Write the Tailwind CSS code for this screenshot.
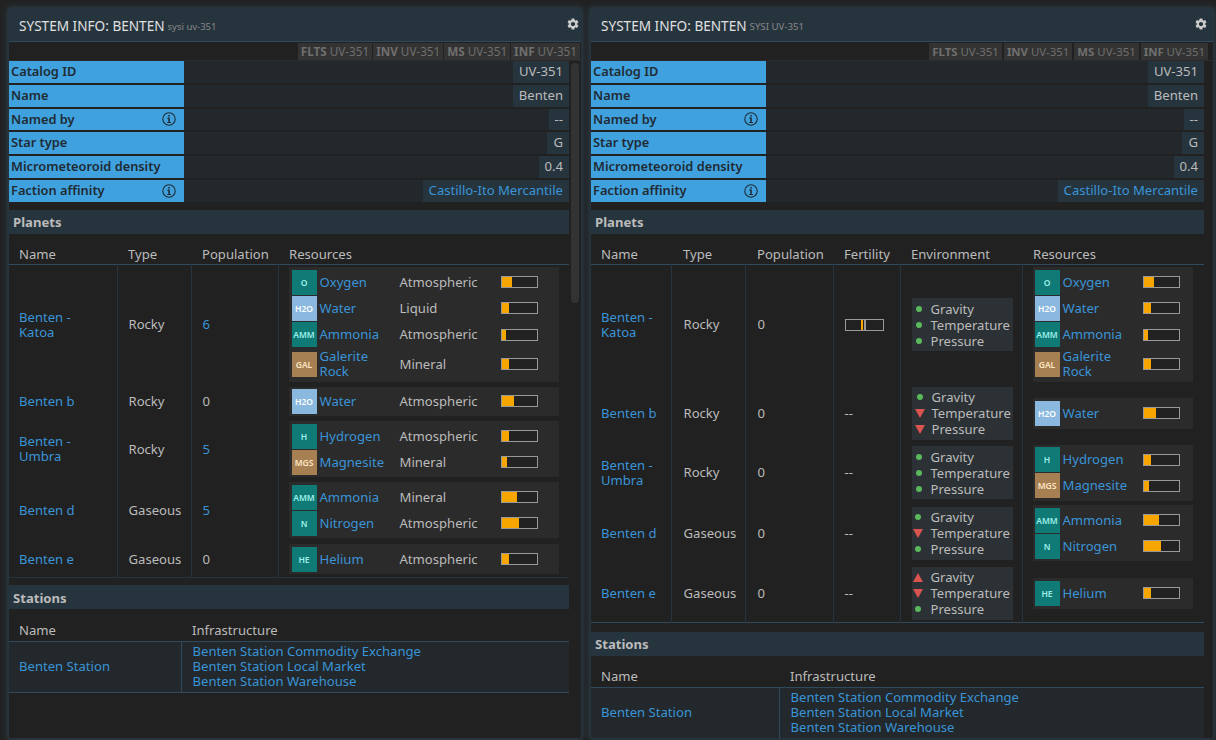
<!DOCTYPE html>
<html lang="en">
<head>
<meta charset="UTF-8">
<title>System Info: Benten</title>
<script src="https://cdn.jsdelivr.net/npm/@tailwindcss/browser@4"></script>
</head>
<body class="bg-[#222222] font-['Noto_Sans',sans-serif] text-[13.1px] leading-[15px] text-[#bbbbbb] overflow-hidden">
<svg class="hidden">
  <symbol id="gear" viewBox="0 0 24 24"><path fill="#cccccc" d="M19.14 12.94c.04-.3.06-.61.06-.94 0-.32-.02-.64-.07-.94l2.03-1.58c.18-.14.23-.41.12-.61l-1.92-3.32c-.12-.22-.37-.29-.59-.22l-2.39.96c-.5-.38-1.03-.7-1.62-.94l-.36-2.54c-.04-.24-.24-.41-.48-.41h-3.84c-.24 0-.43.17-.47.41l-.36 2.54c-.59.24-1.13.57-1.62.94l-2.39-.96c-.22-.08-.47 0-.59.22L2.74 8.87c-.12.21-.08.47.12.61l2.03 1.58c-.05.3-.09.63-.09.94s.02.64.07.94l-2.03 1.58c-.18.14-.23.41-.12.61l1.92 3.32c.12.22.37.29.59.22l2.39-.96c.5.38 1.03.7 1.62.94l.36 2.54c.05.24.24.41.48.41h3.84c.24 0 .44-.17.47-.41l.36-2.54c.59-.24 1.13-.56 1.62-.94l2.39.96c.22.08.47 0 .59-.22l1.92-3.32c.12-.22.07-.47-.12-.61l-2.01-1.58zM12 15.6c-1.98 0-3.6-1.62-3.6-3.6s1.62-3.6 3.6-3.6 3.6 1.62 3.6 3.6-1.62 3.6-3.6 3.6z"/></symbol>
  <symbol id="info" viewBox="0 0 14 14"><circle cx="7" cy="7" r="6.2" fill="none" stroke="#1f2a33" stroke-width="1.1"/><rect x="6.3" y="3" width="1.5" height="1.6" fill="#1f2a33"/><rect x="6.3" y="5.6" width="1.5" height="5.2" fill="#1f2a33"/><rect x="5.2" y="5.6" width="2" height="1" fill="#1f2a33"/><rect x="5.2" y="10" width="3.8" height="1" fill="#1f2a33"/></symbol>
  <symbol id="down" viewBox="0 0 10 9"><polygon points="0,0 10,0 5,9" fill="#d9534f"/></symbol>
  <symbol id="up" viewBox="0 0 10 9"><polygon points="0,9 10,9 5,0" fill="#d9534f"/></symbol>
</svg>

<div class="flex h-[740px] pt-[8px] pl-[8px] gap-[8px]">

  <!-- left window -->
  <section class="w-[574px] h-[731px] shrink-0 border border-[#26343e] bg-[#212121] overflow-hidden shadow-[0_0_6px_#2f4a5c]">
    <header class="h-[33px] bg-[#26343e] border-b border-[#2f4a5c] flex items-center pl-[10px] pr-[1px]">
      <span class="text-[13.6px] text-[#e0e0e0]">SYSTEM INFO: BENTEN</span>
      <span class="text-[9.5px] text-[#888888] ml-[3px] mt-[2px]">sysi uv-351</span>
      <svg class="w-[14px] h-[14px] ml-auto mb-[3px]"><use href="#gear"/></svg>
    </header>
    <div class="h-[19px] flex justify-end items-center gap-[1px] border-b border-[#2b2b2b] text-[11.7px] text-[#6f6f6f] pr-[1px]">
      <span class="bg-[#333333] h-[17px] leading-[17px] px-[3px]"><b>FLTS</b> UV-351</span>
      <span class="bg-[#333333] h-[17px] leading-[17px] px-[3px]"><b>INV</b> UV-351</span>
      <span class="bg-[#333333] h-[17px] leading-[17px] px-[3px]"><b>MS</b> UV-351</span>
      <span class="bg-[#333333] h-[17px] leading-[17px] px-[3px]"><b>INF</b> UV-351</span>
    </div>
    <div class="flex">
      <div class="w-[560px] shrink-0">
        <div class="flex flex-col gap-[2px]">
          <div class="h-[21.8px] flex bg-[#22282b]"><div class="w-[175px] bg-[#3fa2de] text-[#1f2a33] text-[12.8px] font-semibold pl-[2px] leading-[21px]">Catalog ID</div><div class="ml-auto bg-[#26343e] px-[6px] leading-[21px]">UV-351</div></div>
          <div class="h-[21.8px] flex bg-[#22282b]"><div class="w-[175px] bg-[#3fa2de] text-[#1f2a33] text-[12.8px] font-semibold pl-[2px] leading-[21px]">Name</div><div class="ml-auto bg-[#26343e] px-[6px] leading-[21px]">Benten</div></div>
          <div class="h-[21.8px] flex bg-[#22282b]"><div class="w-[175px] bg-[#3fa2de] text-[#1f2a33] text-[12.8px] font-semibold pl-[2px] leading-[21px] flex items-center justify-between pr-[8px]">Named by<svg class="w-[14px] h-[14px]"><use href="#info"/></svg></div><div class="ml-auto bg-[#26343e] px-[6px] leading-[21px]">--</div></div>
          <div class="h-[21.8px] flex bg-[#22282b]"><div class="w-[175px] bg-[#3fa2de] text-[#1f2a33] text-[12.8px] font-semibold pl-[2px] leading-[21px]">Star type</div><div class="ml-auto bg-[#26343e] px-[6px] leading-[21px]">G</div></div>
          <div class="h-[21.8px] flex bg-[#22282b]"><div class="w-[175px] bg-[#3fa2de] text-[#1f2a33] text-[12.8px] font-semibold pl-[2px] leading-[21px]">Micrometeoroid density</div><div class="ml-auto bg-[#26343e] px-[6px] leading-[21px]">0.4</div></div>
          <div class="h-[21.8px] flex bg-[#22282b]"><div class="w-[175px] bg-[#3fa2de] text-[#1f2a33] text-[12.8px] font-semibold pl-[2px] leading-[21px] flex items-center justify-between pr-[8px]">Faction affinity<svg class="w-[14px] h-[14px]"><use href="#info"/></svg></div><div class="ml-auto bg-[#26343e] px-[6px] leading-[21px] text-[#3a94d6]">Castillo-Ito Mercantile</div></div>
        </div>

        <h2 class="mt-[8.2px] h-[24px] bg-[#26343e] pl-[4px] font-bold leading-[25px] text-[#bbbbbb]">Planets</h2>
        <table class="mt-[10px] w-[560px] table-fixed border-collapse">
          <colgroup><col class="w-[108px]"><col class="w-[74px]"><col class="w-[87px]"><col class="w-[291px]"></colgroup>
          <thead><tr class="h-[21px] border-b border-[#2f4a5c] text-left"><th class="font-normal pl-[10px]">Name</th><th class="font-normal pl-[11px]">Type</th><th class="font-normal pl-[11px]">Population</th><th class="font-normal pl-[11px]">Resources</th></tr></thead>
          <tbody>
            <tr class="h-[119px]">
              <td class="pl-[10px] pr-[20px] text-[#3a94d6]">Benten - Katoa</td><td class="pl-[11px] border-l border-[#26343e]">Rocky</td><td class="pl-[11px] border-l border-[#26343e] text-[#3a94d6]">6</td>
              <td class="pl-[10px] border-l border-[#26343e]">
                <div class="w-[270px] bg-[#2b2b2b] py-[2px] pl-[3px]">
                  <div class="h-[26px] flex items-center"><div class="w-[25px] h-[25px] flex items-center justify-center bg-[#0f7a76] text-[#9ff0ea] text-[8.5px] font-semibold">O</div><span class="w-[83px] pl-[3px] text-[#3a94d6]">Oxygen</span><span class="w-[101px]">Atmospheric</span><div class="w-[37px] h-[12px] border border-[#999999] bg-[#222222]"><div class="h-full bg-[#f7a600]" style="width:10px"></div></div></div>
                  <div class="h-[26px] flex items-center"><div class="w-[25px] h-[25px] flex items-center justify-center bg-[#8ab8de] text-white text-[8.5px] font-semibold">H2O</div><span class="w-[83px] pl-[3px] text-[#3a94d6]">Water</span><span class="w-[101px]">Liquid</span><div class="w-[37px] h-[12px] border border-[#999999] bg-[#222222]"><div class="h-full bg-[#f7a600]" style="width:7px"></div></div></div>
                  <div class="h-[27px] flex items-center"><div class="w-[25px] h-[25px] flex items-center justify-center bg-[#0f7a76] text-[#9ff0ea] text-[8.5px] font-semibold">AMM</div><span class="w-[83px] pl-[3px] text-[#3a94d6]">Ammonia</span><span class="w-[101px]">Atmospheric</span><div class="w-[37px] h-[12px] border border-[#999999] bg-[#222222]"><div class="h-full bg-[#f7a600]" style="width:4px"></div></div></div>
                  <div class="h-[32px] flex items-center"><div class="w-[25px] h-[25px] flex items-center justify-center bg-[#a67f53] text-[#fde7c5] text-[8.5px] font-semibold">GAL</div><span class="w-[83px] pl-[3px] text-[#3a94d6]">Galerite<br>Rock</span><span class="w-[101px]">Mineral</span><div class="w-[37px] h-[12px] border border-[#999999] bg-[#222222]"><div class="h-full bg-[#f7a600]" style="width:7px"></div></div></div>
                </div>
              </td>
            </tr>
            <tr class="h-[35px]">
              <td class="pl-[10px] pr-[20px] text-[#3a94d6]">Benten b</td><td class="pl-[11px] border-l border-[#26343e]">Rocky</td><td class="pl-[11px] border-l border-[#26343e]">0</td>
              <td class="pl-[10px] border-l border-[#26343e]">
                <div class="w-[270px] bg-[#2b2b2b] py-[2px] pl-[3px]">
                  <div class="h-[25px] flex items-center"><div class="w-[25px] h-[25px] flex items-center justify-center bg-[#8ab8de] text-white text-[8.5px] font-semibold">H2O</div><span class="w-[83px] pl-[3px] text-[#3a94d6]">Water</span><span class="w-[101px]">Atmospheric</span><div class="w-[37px] h-[12px] border border-[#999999] bg-[#222222]"><div class="h-full bg-[#f7a600]" style="width:12px"></div></div></div>
                </div>
              </td>
            </tr>
            <tr class="h-[61px]">
              <td class="pl-[10px] pr-[20px] text-[#3a94d6]">Benten - Umbra</td><td class="pl-[11px] border-l border-[#26343e]">Rocky</td><td class="pl-[11px] border-l border-[#26343e] text-[#3a94d6]">5</td>
              <td class="pl-[10px] border-l border-[#26343e]">
                <div class="w-[270px] bg-[#2b2b2b] py-[2px] pl-[3px]">
                  <div class="h-[26px] flex items-center"><div class="w-[25px] h-[25px] flex items-center justify-center bg-[#0f7a76] text-[#9ff0ea] text-[8.5px] font-semibold">H</div><span class="w-[83px] pl-[3px] text-[#3a94d6]">Hydrogen</span><span class="w-[101px]">Atmospheric</span><div class="w-[37px] h-[12px] border border-[#999999] bg-[#222222]"><div class="h-full bg-[#f7a600]" style="width:7px"></div></div></div>
                  <div class="h-[26px] flex items-center"><div class="w-[25px] h-[25px] flex items-center justify-center bg-[#a67f53] text-[#fde7c5] text-[8.5px] font-semibold">MGS</div><span class="w-[83px] pl-[3px] text-[#3a94d6]">Magnesite</span><span class="w-[101px]">Mineral</span><div class="w-[37px] h-[12px] border border-[#999999] bg-[#222222]"><div class="h-full bg-[#f7a600]" style="width:5px"></div></div></div>
                </div>
              </td>
            </tr>
            <tr class="h-[61px]">
              <td class="pl-[10px] pr-[20px] text-[#3a94d6]">Benten d</td><td class="pl-[11px] border-l border-[#26343e]">Gaseous</td><td class="pl-[11px] border-l border-[#26343e] text-[#3a94d6]">5</td>
              <td class="pl-[10px] border-l border-[#26343e]">
                <div class="w-[270px] bg-[#2b2b2b] py-[2px] pl-[3px]">
                  <div class="h-[26px] flex items-center"><div class="w-[25px] h-[25px] flex items-center justify-center bg-[#0f7a76] text-[#9ff0ea] text-[8.5px] font-semibold">AMM</div><span class="w-[83px] pl-[3px] text-[#3a94d6]">Ammonia</span><span class="w-[101px]">Mineral</span><div class="w-[37px] h-[12px] border border-[#999999] bg-[#222222]"><div class="h-full bg-[#f7a600]" style="width:15px"></div></div></div>
                  <div class="h-[26px] flex items-center"><div class="w-[25px] h-[25px] flex items-center justify-center bg-[#0f7a76] text-[#9ff0ea] text-[8.5px] font-semibold">N</div><span class="w-[83px] pl-[3px] text-[#3a94d6]">Nitrogen</span><span class="w-[101px]">Atmospheric</span><div class="w-[37px] h-[12px] border border-[#999999] bg-[#222222]"><div class="h-full bg-[#f7a600]" style="width:17px"></div></div></div>
                </div>
              </td>
            </tr>
            <tr class="h-[37px] border-b border-[#26343e]">
              <td class="pl-[10px] pr-[20px] text-[#3a94d6]">Benten e</td><td class="pl-[11px] border-l border-[#26343e]">Gaseous</td><td class="pl-[11px] border-l border-[#26343e]">0</td>
              <td class="pl-[10px] border-l border-[#26343e]">
                <div class="w-[270px] bg-[#2b2b2b] py-[2px] pl-[3px]">
                  <div class="h-[26px] flex items-center"><div class="w-[25px] h-[25px] flex items-center justify-center bg-[#0f7a76] text-[#9ff0ea] text-[8.5px] font-semibold">HE</div><span class="w-[83px] pl-[3px] text-[#3a94d6]">Helium</span><span class="w-[101px]">Atmospheric</span><div class="w-[37px] h-[12px] border border-[#999999] bg-[#222222]"><div class="h-full bg-[#f7a600]" style="width:7px"></div></div></div>
                </div>
              </td>
            </tr>
          </tbody>
        </table>

        <h2 class="mt-[7px] h-[24px] bg-[#26343e] pl-[4px] font-bold leading-[27px] text-[#bbbbbb]">Stations</h2>
        <table class="mt-[10px] w-[560px] table-fixed border-collapse">
          <colgroup><col class="w-[172px]"><col></colgroup>
          <thead><tr class="h-[22px] border-b border-[#2f4a5c] text-left"><th class="font-normal pl-[10px]">Name</th><th class="font-normal pl-[11px]">Infrastructure</th></tr></thead>
          <tbody><tr class="h-[51px] border-b border-[#2f4a5c] bg-[#22282b]"><td class="pl-[10px] text-[#3a94d6]">Benten Station</td><td class="pl-[11px] border-l border-[#2f4a5c] text-[#3a94d6]"><div>Benten Station Commodity Exchange</div><div>Benten Station Local Market</div><div>Benten Station Warehouse</div></td></tr></tbody>
        </table>
      </div>
      <div class="ml-[2px] mt-[2px] w-[8px] h-[240px] rounded-[4px] bg-[#333333]"></div>
    </div>
  </section>

  <!-- right window -->
  <section class="w-[624px] h-[731px] shrink-0 border border-[#26343e] bg-[#212121] overflow-hidden shadow-[0_0_6px_#2f4a5c]">
    <header class="h-[33px] bg-[#26343e] border-b border-[#2f4a5c] flex items-center pl-[10px] pr-[5px]">
      <span class="text-[13.6px] text-[#e0e0e0]">SYSTEM INFO: BENTEN</span>
      <span class="text-[9.7px] text-[#888888] ml-[3px] mt-[2px]">SYSI UV-351</span>
      <svg class="w-[14px] h-[14px] ml-auto mb-[3px]"><use href="#gear"/></svg>
    </header>
    <div class="h-[19px] flex justify-end items-center gap-[2px] border-b border-[#2b2b2b] text-[11.4px] text-[#6f6f6f] pr-[5px]">
      <span class="bg-[#333333] h-[17px] leading-[17px] px-[3px]"><b>FLTS</b> UV-351</span>
      <span class="bg-[#333333] h-[17px] leading-[17px] px-[3px]"><b>INV</b> UV-351</span>
      <span class="bg-[#333333] h-[17px] leading-[17px] px-[3px]"><b>MS</b> UV-351</span>
      <span class="bg-[#333333] h-[17px] leading-[17px] px-[3px]"><b>INF</b> UV-351</span>
    </div>
    <div class="w-[613px]">
      <div class="flex flex-col gap-[2px]">
        <div class="h-[21.8px] flex bg-[#22282b]"><div class="w-[175px] bg-[#3fa2de] text-[#1f2a33] text-[12.8px] font-semibold pl-[2px] leading-[21px]">Catalog ID</div><div class="ml-auto bg-[#26343e] px-[6px] leading-[21px]">UV-351</div></div>
        <div class="h-[21.8px] flex bg-[#22282b]"><div class="w-[175px] bg-[#3fa2de] text-[#1f2a33] text-[12.8px] font-semibold pl-[2px] leading-[21px]">Name</div><div class="ml-auto bg-[#26343e] px-[6px] leading-[21px]">Benten</div></div>
        <div class="h-[21.8px] flex bg-[#22282b]"><div class="w-[175px] bg-[#3fa2de] text-[#1f2a33] text-[12.8px] font-semibold pl-[2px] leading-[21px] flex items-center justify-between pr-[8px]">Named by<svg class="w-[14px] h-[14px]"><use href="#info"/></svg></div><div class="ml-auto bg-[#26343e] px-[6px] leading-[21px]">--</div></div>
        <div class="h-[21.8px] flex bg-[#22282b]"><div class="w-[175px] bg-[#3fa2de] text-[#1f2a33] text-[12.8px] font-semibold pl-[2px] leading-[21px]">Star type</div><div class="ml-auto bg-[#26343e] px-[6px] leading-[21px]">G</div></div>
        <div class="h-[21.8px] flex bg-[#22282b]"><div class="w-[175px] bg-[#3fa2de] text-[#1f2a33] text-[12.8px] font-semibold pl-[2px] leading-[21px]">Micrometeoroid density</div><div class="ml-auto bg-[#26343e] px-[6px] leading-[21px]">0.4</div></div>
        <div class="h-[21.8px] flex bg-[#22282b]"><div class="w-[175px] bg-[#3fa2de] text-[#1f2a33] text-[12.8px] font-semibold pl-[2px] leading-[21px] flex items-center justify-between pr-[8px]">Faction affinity<svg class="w-[14px] h-[14px]"><use href="#info"/></svg></div><div class="ml-auto bg-[#26343e] px-[6px] leading-[21px] text-[#3a94d6]">Castillo-Ito Mercantile</div></div>
      </div>

      <h2 class="mt-[8.2px] h-[24px] bg-[#26343e] pl-[4px] font-bold leading-[25px] text-[#bbbbbb]">Planets</h2>
      <table class="mt-[10px] w-[613px] table-fixed border-collapse">
        <colgroup><col class="w-[80px]"><col class="w-[74px]"><col class="w-[88px]"><col class="w-[67px]"><col class="w-[122px]"><col class="w-[182px]"></colgroup>
        <thead><tr class="h-[21px] border-b border-[#2f4a5c] text-left"><th class="font-normal pl-[10px]">Name</th><th class="font-normal pl-[12px]">Type</th><th class="font-normal pl-[12px]">Population</th><th class="font-normal pl-[11px]">Fertility</th><th class="font-normal pl-[11px]">Environment</th><th class="font-normal pl-[11px]">Resources</th></tr></thead>
        <tbody>
          <tr class="h-[119px]">
            <td class="pl-[10px] text-[#3a94d6]">Benten - Katoa</td><td class="pl-[12px] border-l border-[#26343e]">Rocky</td><td class="pl-[12px] border-l border-[#26343e]">0</td>
            <td class="pl-[11px] border-l border-[#26343e]"><div class="relative w-[39px] h-[12px] border border-[#999999]"><div class="absolute left-[15px] top-0 w-[2px] h-full bg-[#f7a600]"></div><div class="absolute left-[18px] top-[-1px] w-[2px] h-[12px] bg-[#999999]"></div></div></td>
            <td class="pl-[11px] border-l border-[#26343e]">
              <div class="w-[101px] h-[53px] bg-[#2b3135] flex flex-col justify-center leading-[16px] overflow-hidden whitespace-nowrap">
                <div class="flex items-center"><span class="w-[19px] flex justify-center pr-[7px] pl-[2px]"><span class="w-[6px] h-[6px] rounded-full bg-[#5cb85c]"></span></span>Gravity</div>
                <div class="flex items-center"><span class="w-[19px] flex justify-center pr-[7px] pl-[2px]"><span class="w-[6px] h-[6px] rounded-full bg-[#5cb85c]"></span></span>Temperature</div>
                <div class="flex items-center"><span class="w-[19px] flex justify-center pr-[7px] pl-[2px]"><span class="w-[6px] h-[6px] rounded-full bg-[#5cb85c]"></span></span>Pressure</div>
              </div>
            </td>
            <td class="pl-[10px] border-l border-[#26343e]">
              <div class="w-[160px] bg-[#2b2b2b] py-[2px] pl-[2px]">
                <div class="h-[26px] flex items-center"><div class="w-[25px] h-[25px] flex items-center justify-center bg-[#0f7a76] text-[#9ff0ea] text-[8.5px] font-semibold">O</div><span class="w-[83px] pl-[3px] text-[#3a94d6]">Oxygen</span><div class="w-[37px] h-[12px] border border-[#999999] bg-[#222222]"><div class="h-full bg-[#f7a600]" style="width:10px"></div></div></div>
                <div class="h-[26px] flex items-center"><div class="w-[25px] h-[25px] flex items-center justify-center bg-[#8ab8de] text-white text-[8.5px] font-semibold">H2O</div><span class="w-[83px] pl-[3px] text-[#3a94d6]">Water</span><div class="w-[37px] h-[12px] border border-[#999999] bg-[#222222]"><div class="h-full bg-[#f7a600]" style="width:7px"></div></div></div>
                <div class="h-[27px] flex items-center"><div class="w-[25px] h-[25px] flex items-center justify-center bg-[#0f7a76] text-[#9ff0ea] text-[8.5px] font-semibold">AMM</div><span class="w-[83px] pl-[3px] text-[#3a94d6]">Ammonia</span><div class="w-[37px] h-[12px] border border-[#999999] bg-[#222222]"><div class="h-full bg-[#f7a600]" style="width:4px"></div></div></div>
                <div class="h-[32px] flex items-center"><div class="w-[25px] h-[25px] flex items-center justify-center bg-[#a67f53] text-[#fde7c5] text-[8.5px] font-semibold">GAL</div><span class="w-[83px] pl-[3px] text-[#3a94d6]">Galerite<br>Rock</span><div class="w-[37px] h-[12px] border border-[#999999] bg-[#222222]"><div class="h-full bg-[#f7a600]" style="width:7px"></div></div></div>
              </div>
            </td>
          </tr>
          <tr class="h-[59px]">
            <td class="pl-[10px] text-[#3a94d6]">Benten b</td><td class="pl-[12px] border-l border-[#26343e]">Rocky</td><td class="pl-[12px] border-l border-[#26343e]">0</td>
            <td class="pl-[11px] border-l border-[#26343e]">--</td>
            <td class="pl-[11px] border-l border-[#26343e]">
              <div class="w-[101px] h-[53px] bg-[#2b3135] flex flex-col justify-center leading-[16px] overflow-hidden whitespace-nowrap">
                <div class="flex items-center"><span class="w-[20px] flex justify-center pr-[6px] pl-[3px]"><span class="w-[6px] h-[6px] rounded-full bg-[#5cb85c]"></span></span>Gravity</div>
                <div class="flex items-center"><span class="w-[20px] flex justify-center pr-[6px] pl-[3px]"><svg class="w-[10px] h-[9px]"><use href="#down"/></svg></span>Temperature</div>
                <div class="flex items-center"><span class="w-[20px] flex justify-center pr-[6px] pl-[3px]"><svg class="w-[10px] h-[9px]"><use href="#down"/></svg></span>Pressure</div>
              </div>
            </td>
            <td class="pl-[10px] border-l border-[#26343e]">
              <div class="w-[160px] bg-[#2b2b2b] py-[3px] pl-[2px]">
                <div class="h-[25px] flex items-center"><div class="w-[25px] h-[25px] flex items-center justify-center bg-[#8ab8de] text-white text-[8.5px] font-semibold">H2O</div><span class="w-[83px] pl-[3px] text-[#3a94d6]">Water</span><div class="w-[37px] h-[12px] border border-[#999999] bg-[#222222]"><div class="h-full bg-[#f7a600]" style="width:12px"></div></div></div>
              </div>
            </td>
          </tr>
          <tr class="h-[60px]">
            <td class="pl-[10px] text-[#3a94d6]">Benten - Umbra</td><td class="pl-[12px] border-l border-[#26343e]">Rocky</td><td class="pl-[12px] border-l border-[#26343e]">0</td>
            <td class="pl-[11px] border-l border-[#26343e]">--</td>
            <td class="pl-[11px] border-l border-[#26343e]">
              <div class="w-[101px] h-[53px] bg-[#2b3135] flex flex-col justify-center leading-[16px] overflow-hidden whitespace-nowrap">
                <div class="flex items-center"><span class="w-[19px] flex justify-center pr-[7px] pl-[2px]"><span class="w-[6px] h-[6px] rounded-full bg-[#5cb85c]"></span></span>Gravity</div>
                <div class="flex items-center"><span class="w-[19px] flex justify-center pr-[7px] pl-[2px]"><span class="w-[6px] h-[6px] rounded-full bg-[#5cb85c]"></span></span>Temperature</div>
                <div class="flex items-center"><span class="w-[19px] flex justify-center pr-[7px] pl-[2px]"><span class="w-[6px] h-[6px] rounded-full bg-[#5cb85c]"></span></span>Pressure</div>
              </div>
            </td>
            <td class="pl-[10px] border-l border-[#26343e]">
              <div class="w-[160px] bg-[#2b2b2b] py-[2px] pl-[2px]">
                <div class="h-[26px] flex items-center"><div class="w-[25px] h-[25px] flex items-center justify-center bg-[#0f7a76] text-[#9ff0ea] text-[8.5px] font-semibold">H</div><span class="w-[83px] pl-[3px] text-[#3a94d6]">Hydrogen</span><div class="w-[37px] h-[12px] border border-[#999999] bg-[#222222]"><div class="h-full bg-[#f7a600]" style="width:7px"></div></div></div>
                <div class="h-[26px] flex items-center"><div class="w-[25px] h-[25px] flex items-center justify-center bg-[#a67f53] text-[#fde7c5] text-[8.5px] font-semibold">MGS</div><span class="w-[83px] pl-[3px] text-[#3a94d6]">Magnesite</span><div class="w-[37px] h-[12px] border border-[#999999] bg-[#222222]"><div class="h-full bg-[#f7a600]" style="width:5px"></div></div></div>
              </div>
            </td>
          </tr>
          <tr class="h-[61px]">
            <td class="pl-[10px] text-[#3a94d6]">Benten d</td><td class="pl-[12px] border-l border-[#26343e]">Gaseous</td><td class="pl-[12px] border-l border-[#26343e]">0</td>
            <td class="pl-[11px] border-l border-[#26343e]">--</td>
            <td class="pl-[11px] border-l border-[#26343e]">
              <div class="w-[101px] h-[53px] bg-[#2b3135] flex flex-col justify-center leading-[16px] overflow-hidden whitespace-nowrap">
                <div class="flex items-center"><span class="w-[19px] flex justify-center pr-[7px] pl-[1px]"><span class="w-[6px] h-[6px] rounded-full bg-[#5cb85c]"></span></span>Gravity</div>
                <div class="flex items-center"><span class="w-[19px] flex justify-center pr-[7px] pl-[1px]"><svg class="w-[10px] h-[9px]"><use href="#down"/></svg></span>Temperature</div>
                <div class="flex items-center"><span class="w-[19px] flex justify-center pr-[7px] pl-[1px]"><span class="w-[6px] h-[6px] rounded-full bg-[#5cb85c]"></span></span>Pressure</div>
              </div>
            </td>
            <td class="pl-[10px] border-l border-[#26343e]">
              <div class="w-[160px] bg-[#2b2b2b] py-[2px] pl-[2px]">
                <div class="h-[26px] flex items-center"><div class="w-[25px] h-[25px] flex items-center justify-center bg-[#0f7a76] text-[#9ff0ea] text-[8.5px] font-semibold">AMM</div><span class="w-[83px] pl-[3px] text-[#3a94d6]">Ammonia</span><div class="w-[37px] h-[12px] border border-[#999999] bg-[#222222]"><div class="h-full bg-[#f7a600]" style="width:15px"></div></div></div>
                <div class="h-[26px] flex items-center"><div class="w-[25px] h-[25px] flex items-center justify-center bg-[#0f7a76] text-[#9ff0ea] text-[8.5px] font-semibold">N</div><span class="w-[83px] pl-[3px] text-[#3a94d6]">Nitrogen</span><div class="w-[37px] h-[12px] border border-[#999999] bg-[#222222]"><div class="h-full bg-[#f7a600]" style="width:17px"></div></div></div>
              </div>
            </td>
          </tr>
          <tr class="h-[59px] border-b border-[#2f4a5c]">
            <td class="pl-[10px] text-[#3a94d6]">Benten e</td><td class="pl-[12px] border-l border-[#26343e]">Gaseous</td><td class="pl-[12px] border-l border-[#26343e]">0</td>
            <td class="pl-[11px] border-l border-[#26343e]">--</td>
            <td class="pl-[11px] border-l border-[#26343e]">
              <div class="w-[101px] h-[53px] bg-[#2b3135] flex flex-col justify-center leading-[16px] overflow-hidden whitespace-nowrap">
                <div class="flex items-center"><span class="w-[19px] flex justify-center pr-[7px] pl-[1px]"><svg class="w-[10px] h-[9px]"><use href="#up"/></svg></span>Gravity</div>
                <div class="flex items-center"><span class="w-[19px] flex justify-center pr-[7px] pl-[1px]"><svg class="w-[10px] h-[9px]"><use href="#down"/></svg></span>Temperature</div>
                <div class="flex items-center"><span class="w-[19px] flex justify-center pr-[7px] pl-[1px]"><span class="w-[6px] h-[6px] rounded-full bg-[#5cb85c]"></span></span>Pressure</div>
              </div>
            </td>
            <td class="pl-[10px] border-l border-[#26343e]">
              <div class="w-[160px] bg-[#2b2b2b] py-[3px] pl-[2px]">
                <div class="h-[25px] flex items-center"><div class="w-[25px] h-[25px] flex items-center justify-center bg-[#0f7a76] text-[#9ff0ea] text-[8.5px] font-semibold">HE</div><span class="w-[83px] pl-[3px] text-[#3a94d6]">Helium</span><div class="w-[37px] h-[12px] border border-[#999999] bg-[#222222]"><div class="h-full bg-[#f7a600]" style="width:7px"></div></div></div>
              </div>
            </td>
          </tr>
        </tbody>
      </table>

      <h2 class="mt-[9px] h-[24px] bg-[#26343e] pl-[4px] font-bold leading-[25px] text-[#bbbbbb]">Stations</h2>
      <table class="mt-[9px] w-[613px] table-fixed border-collapse">
        <colgroup><col class="w-[188px]"><col></colgroup>
        <thead><tr class="h-[22px] border-b border-[#2f4a5c] text-left"><th class="font-normal pl-[10px]">Name</th><th class="font-normal pl-[11px]">Infrastructure</th></tr></thead>
        <tbody><tr class="h-[51px] border-b border-[#2f4a5c] bg-[#22282b]"><td class="pl-[10px] text-[#3a94d6]">Benten Station</td><td class="pl-[11px] border-l border-[#2f4a5c] text-[#3a94d6]"><div>Benten Station Commodity Exchange</div><div>Benten Station Local Market</div><div>Benten Station Warehouse</div></td></tr></tbody>
      </table>
    </div>
  </section>
</div>
</body>
</html>
